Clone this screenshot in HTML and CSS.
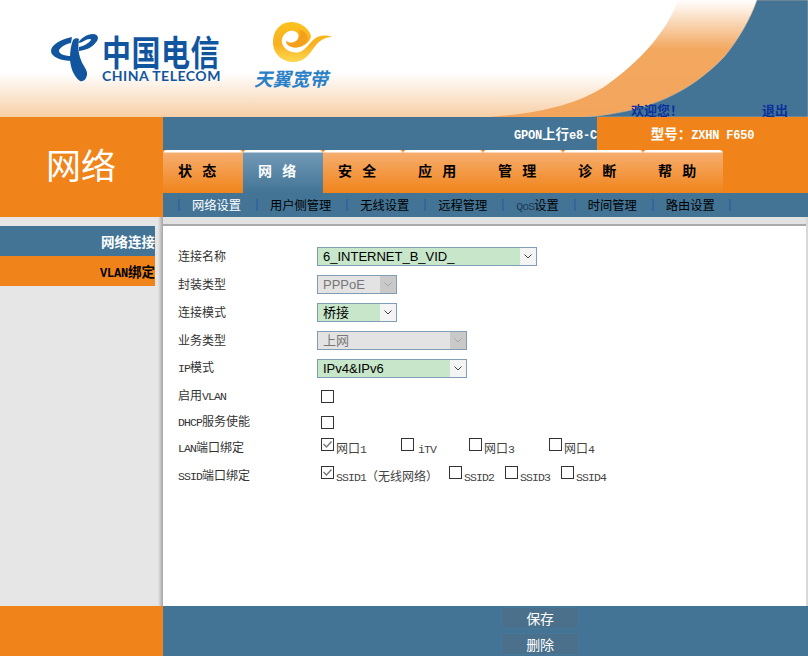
FILE: index.html
```html
<!DOCTYPE html>
<html lang="zh-CN">
<head>
<meta charset="utf-8">
<title>网络</title>
<link rel="stylesheet" href="styles.css">
</head>
<body>
<div class="page">
  <header class="banner">
    <svg class="banner-art" width="808" height="117" viewBox="0 0 808 117">
      <defs>
        <linearGradient id="sky" x1="0" y1="0" x2="0" y2="1">
          <stop offset="0.62" stop-color="#ffffff"/>
          <stop offset="1" stop-color="#f7cfa6"/>
        </linearGradient>
        <linearGradient id="band" x1="0" y1="0" x2="0" y2="1">
          <stop offset="0" stop-color="#ffffff"/>
          <stop offset="0.42" stop-color="#f3a860"/>
          <stop offset="1" stop-color="#f3a55c"/>
        </linearGradient>
      </defs>
      <rect width="808" height="117" fill="url(#sky)"/>
      <path d="M678 0 C668 30 640 62 604 87 C575 105 540 113 490 117 L600 117 C650 112 690 92 724 57 C738 40 750 20 757 0 Z" fill="url(#band)"/>
      <path d="M757 0 C750 20 738 40 724 57 C690 92 650 112 585 117 L808 117 L808 0 Z" fill="#437495" stroke="#c9b3a0" stroke-width="0.6"/>
    </svg>
    <div class="logos">
      <svg class="e-mark" width="50" height="50" viewBox="0 0 50 50">
        <path fill="#12559f" d="M22 4 C11 6 1 12 1 18 C1 24 11 28 23 28 L22 23 C15 23 9 21 9 18 C9 15 15 11 21 10 Z"/>
        <path fill="#12559f" d="M23 7 C25 5 27 5 29 6 C28 12 28 20 31 27 C33 33 38 37 37 42 C36 47 33 49 30 48 C24 44 20 34 20 25 C20 18 21 12 23 7 Z"/>
        <path fill="#12559f" d="M28 10 C31 5 37 1 43 1 C48 1 49 5 47 8 C43 14 37 17 29 18 L29 14 C34 13 39 10 41 7 C41 5 37 6 34 8 C32 9 30 10 28 10 Z"/>
      </svg>
      <div class="ct-words">
        <div class="ct-cn">中国电信</div>
        <div class="ct-en">CHINA TELECOM</div>
      </div>
      <div class="ty">
        <svg class="ty-swirl" width="60" height="42" viewBox="0 0 60 42">
          <defs>
            <linearGradient id="gold" x1="0" y1="0" x2="0" y2="1">
              <stop offset="0" stop-color="#fbc21e"/>
              <stop offset="0.55" stop-color="#f8b020"/>
              <stop offset="1" stop-color="#fcd84f"/>
            </linearGradient>
          </defs>
          <path fill="url(#gold)" d="M19 0 C8 0 1 9 1 20 C1 32 10 40 22 40 C33 40 38 31 44 23 C48 18 54 15 60 15 C52 12 45 14 41 18 C37 22 34 27 28 30 C20 32 12 28 10 21 C9 15 13 10 18 9 C24 8 28 12 26 17 C24 21 17 22 14 19 C14 21 16 24 20 25 C28 27 38 22 39 14 C37 6 28 0 19 0 Z"/>
          <path fill="#f4a01c" d="M26 17 C24 21 17 22 14 19 C14 21 16 24 20 25 C27 27 34 23 36 17 C35 11 31 8 27 8 C28 11 28 14 26 17 Z"/>
        </svg>
        <div class="ty-name">天翼宽带</div>
      </div>
    </div>
    <div class="welcome">欢迎您！</div>
    <a class="logout" href="#">退出</a>
  </header>

  <section class="top">
    <div class="section-title">网络</div>
    <div class="top-main">
      <div class="status">
        <div class="status-left"><span class="lat">GPON</span>上行<span class="lat">e8-C</span></div>
        <div class="status-model">型号：<span class="lat">ZXHN F650</span></div>
      </div>
      <nav class="tabs">
        <a class="tab" href="#">状 态</a>
        <a class="tab active" href="#">网 络</a>
        <a class="tab" href="#">安 全</a>
        <a class="tab" href="#">应 用</a>
        <a class="tab" href="#">管 理</a>
        <a class="tab" href="#">诊 断</a>
        <a class="tab" href="#">帮 助</a>
      </nav>
      <nav class="subnav">
        <a class="current" href="#">网络设置</a>
        <a href="#">用户侧管理</a>
        <a href="#">无线设置</a>
        <a href="#">远程管理</a>
        <a href="#"><span class="lat qos">QoS</span>设置</a>
        <a href="#">时间管理</a>
        <a href="#">路由设置</a>
      </nav>
    </div>
  </section>

  <section class="middle">
    <aside class="side">
      <div class="side-item blue">网络连接</div>
      <div class="side-item orange"><span class="lat">VLAN</span>绑定</div>
    </aside>
    <main class="content">
      <div class="strip"></div>
      <form class="form">
        <div class="row h28"><label class="lbl">连接名称</label>
          <select class="sel w220"><option>6_INTERNET_B_VID_</option></select></div>
        <div class="row h28"><label class="lbl">封装类型</label>
          <select class="sel w80" disabled><option>PPPoE</option></select></div>
        <div class="row h28"><label class="lbl">连接模式</label>
          <select class="sel w80"><option>桥接</option></select></div>
        <div class="row h28"><label class="lbl">业务类型</label>
          <select class="sel w150" disabled><option>上网</option></select></div>
        <div class="row h28"><label class="lbl"><span class="lat">IP</span>模式</label>
          <select class="sel w150"><option>IPv4&amp;IPv6</option></select></div>
        <div class="row h28"><label class="lbl">启用<span class="lat">VLAN</span></label>
          <input class="chk" type="checkbox"></div>
        <div class="row h24"><label class="lbl"><span class="lat">DHCP</span>服务使能</label>
          <input class="chk" type="checkbox"></div>
        <div class="row h27"><label class="lbl"><span class="lat">LAN</span>端口绑定</label>
          <div class="opts">
            <label class="opt o80"><input class="chk" type="checkbox" checked><span class="tx"><span>网口</span><span class="lat">1</span></span></label>
            <label class="opt o68"><input class="chk" type="checkbox"><span class="tx itv"><span class="lat">iTV</span></span></label>
            <label class="opt o80"><input class="chk" type="checkbox"><span class="tx"><span>网口</span><span class="lat">3</span></span></label>
            <label class="opt o80"><input class="chk" type="checkbox"><span class="tx"><span>网口</span><span class="lat">4</span></span></label>
          </div></div>
        <div class="row h30"><label class="lbl"><span class="lat">SSID</span>端口绑定</label>
          <div class="opts">
            <label class="opt o128"><input class="chk" type="checkbox" checked><span class="tx"><span class="lat">SSID1</span><span>（无线网络）</span></span></label>
            <label class="opt o56"><input class="chk" type="checkbox"><span class="tx"><span class="lat">SSID2</span></span></label>
            <label class="opt o56"><input class="chk" type="checkbox"><span class="tx"><span class="lat">SSID3</span></span></label>
            <label class="opt o56"><input class="chk" type="checkbox"><span class="tx"><span class="lat">SSID4</span></span></label>
          </div></div>
      </form>
    </main>
  </section>

  <footer class="foot">
    <div class="foot-left"></div>
    <div class="foot-main">
      <button class="btn" type="button">保存</button>
      <button class="btn" type="button">删除</button>
    </div>
  </footer>
</div>
</body>
</html>
```
FILE: styles.css
```css
* { box-sizing: border-box; }
html, body { margin: 0; padding: 0; }
body {
  font-family: "Noto Sans CJK SC", sans-serif;
  font-size: 12px;
  color: #333;
  background: #fff;
}
a { text-decoration: none; color: inherit; }
.page { width: 808px; height: 656px; overflow: hidden; display: flex; flex-direction: column; }
.lat { font-family: "Liberation Mono", monospace; font-size: 11.5px; letter-spacing: -.9px; }

/* banner */
.banner { position: relative; height: 117px; flex: none; }
.banner-art { position: absolute; left: 0; top: 0; display: block; }
.logos { position: relative; display: flex; align-items: flex-start; padding: 33px 0 0 50px; }
.e-mark { flex: none; display: block; }
.ct-words { margin-left: 2px; width: 120px; }
.ct-cn {
  margin-top: 6px; height: 28px;
  font-size: 29px; line-height: 28px; font-weight: 700; color: #12559f; white-space: nowrap; letter-spacing: .5px;
  transform: scaleY(1.2); transform-origin: 0 100%;
}
.ct-en { margin-top: 2px; font-family: "Lato", sans-serif; font-size: 14px; line-height: 14px; font-weight: 700; color: #12559f; white-space: nowrap; letter-spacing: .5px; }
.ty { margin: -11px 0 0 32px; width: 80px; }
.ty-swirl { display: block; margin-left: 18px; }
.ty-name { font-size: 18.5px; line-height: 22px; font-weight: 700; font-style: italic; color: #2a80c8; white-space: nowrap; margin-top: 3px; }
.welcome, .logout {
  position: absolute; top: 103px; line-height: 14px; font-size: 13px; font-weight: 700; color: #0b309c;
}
.welcome { left: 631px; }
.logout { left: 762px; }

/* top */
.top { display: flex; height: 100px; flex: none; background: #f0841a; }
.section-title { width: 163px; flex: none; padding: 24px 0 0 46px; font-size: 35px; line-height: 46px; color: #fff; }
.top-main { flex: 1; display: flex; flex-direction: column; }
.status { display: flex; height: 33px; background: #437495; color: #fff; font-weight: 700; line-height: 33px; font-size: 13.5px; }
.status .lat { font-size: 12px; letter-spacing: -.2px; }
.status-left { width: 434px; text-align: right; }
.status-model { flex: 1; background: #f0841a; text-align: center; }
.tabs { display: flex; height: 43px; }
.tab {
  width: 80px; padding: 8px 0 0 15px; line-height: 24px; font-size: 14px; font-weight: 700; color: #000; white-space: pre; word-spacing: 7px;
  background: linear-gradient(#ffffff 0, #ffffff 2px, #f6ad6e 3px, #f0841a 100%);
  border-radius: 4px 4px 0 0;
}
.tab.active { color: #fff; background: linear-gradient(#ffffff 0, #ffffff 2px, #7199b6 3px, #437495 100%); }
.subnav { display: flex; height: 24px; background: #437495; padding-left: 15px; line-height: 24px; color: #000; font-size: 12.25px; }
.subnav a { padding: 0 15px 0 14px; white-space: nowrap; position: relative; }
.subnav a::before { content: ""; position: absolute; left: 0; top: 6px; height: 12px; width: 2px; background: #35659a; }
.subnav a:last-child::after { content: ""; position: absolute; right: -1px; top: 6px; height: 12px; width: 2px; background: #35659a; }
.subnav .current { color: #fff; }
.qos { color: #1d3a55; }

/* middle */
.middle { flex: 1; display: flex; min-height: 0; }
.side { width: 163px; flex: none; background: linear-gradient(to right, #e6e6e6 158px, #a4a4a4 163px); padding: 9px 8px 0 0; }
.side-item { height: 30px; line-height: 30px; text-align: right; font-weight: 700; font-size: 13.5px; }
.side-item .lat { font-size: 12px; letter-spacing: -.2px; }
.side-item.blue { background: #437495; color: #fff; }
.side-item.orange { background: #f0841a; color: #000; }
.content { flex: 1; display: flex; flex-direction: column; background: #fff; border-right: 2px solid #d8d8d8; }
.strip { height: 9px; flex: none; background: #e2e2e2; border-bottom: 2px solid #aaa; }
.form { padding: 16px 0 0 15px; }
.row { display: flex; align-items: center; }
.h28 { height: 28px; }
.h24 { height: 24px; }
.h27 { height: 27px; }
.h30 { height: 30px; }
.lbl { width: 139px; flex: none; line-height: 16px; }
.row > .chk { margin-left: 4px; }
.sel {
  appearance: none; -webkit-appearance: none;
  height: 19px; padding: 0 20px 0 5px; margin: 0;
  border: 1px solid #7f9db9; border-radius: 0;
  font-family: "Liberation Sans", "Noto Sans CJK SC", sans-serif; font-size: 13px; line-height: 17px; color: #000;
  background-color: #c8e6c9;
  background-image:
    url("data:image/svg+xml;utf8,<svg xmlns='http://www.w3.org/2000/svg' width='16' height='17'><path d='M4.5 6.5 L8 10 L11.5 6.5' fill='none' stroke='%23444' stroke-width='1'/></svg>"),
    linear-gradient(#f4f4f4, #f4f4f4);
  background-repeat: no-repeat;
  background-position: right 0 top 0, right 0 top 0;
  background-size: 16px 17px, 16px 17px;
}
.sel:disabled {
  opacity: 1; color: #777; background-color: #e3e3e3;
  background-image:
    url("data:image/svg+xml;utf8,<svg xmlns='http://www.w3.org/2000/svg' width='16' height='17'><path d='M4.5 6.5 L8 10 L11.5 6.5' fill='none' stroke='%23a8a8a8' stroke-width='1'/></svg>"),
    linear-gradient(#c9c9c9, #c9c9c9);
}
.w220 { width: 220px; }
.w80 { width: 80px; }
.w150 { width: 150px; }
.chk {
  appearance: none; -webkit-appearance: none;
  width: 13px; height: 13px; margin: 0; flex: none;
  border: 1px solid #333; background: #fff; border-radius: 0;
}
.chk:checked {
  background-image: url("data:image/svg+xml;utf8,<svg xmlns='http://www.w3.org/2000/svg' width='11' height='11'><path d='M1.5 5 L4.5 8 L9.5 2.5' fill='none' stroke='%23777' stroke-width='1.4'/></svg>");
  background-repeat: no-repeat;
}
.opts { display: flex; margin-left: 4px; }
.opt { display: flex; align-items: flex-start; }
.o80 { width: 80px; }
.o68 { width: 68px; }
.o128 { width: 128px; }
.o56 { width: 56px; }
.tx { margin: 2px 0 0 2px; line-height: 16px; white-space: nowrap; color: #444; }
.itv { margin-left: 4px; }

/* footer */
.foot { display: flex; height: 50px; flex: none; }
.foot-left { width: 163px; background: #f0841a; }
.foot-main { flex: 1; background: #437495; padding: 1px 0 0 338px; display: flex; flex-direction: column; gap: 4px; }
.btn {
  width: 78px; height: 22px; padding: 0; flex: none;
  border: 1px solid #477798; background: #4a708c; color: #fff;
  font-family: "Noto Sans CJK SC", sans-serif; font-size: 14px; line-height: 20px; letter-spacing: -.2px;
}
```
